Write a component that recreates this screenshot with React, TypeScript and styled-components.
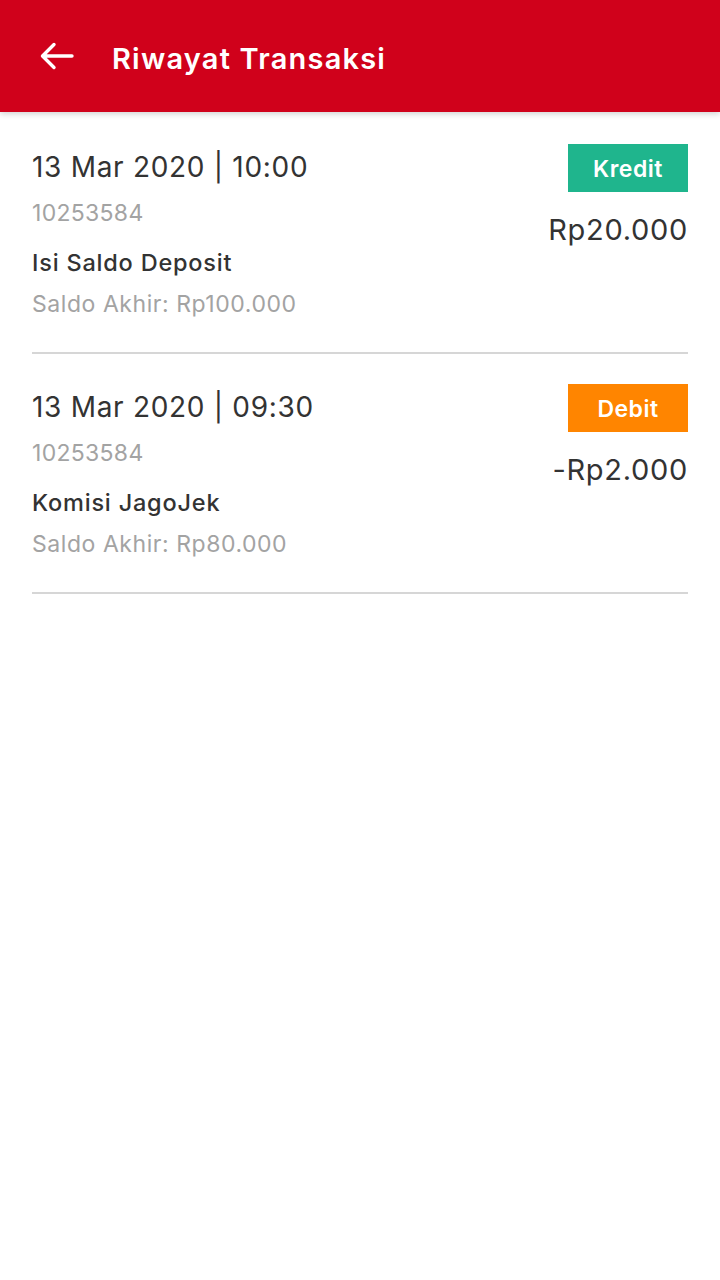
import React from "react";
import styled, { createGlobalStyle } from "styled-components";

const Global = createGlobalStyle`
  html, body { margin: 0; padding: 0; background: #ffffff; }
  body { font-family: "Inter", "Noto Sans", sans-serif; }
  * { box-sizing: border-box; }
`;

const Page = styled.div`
  width: 720px;
  min-height: 1280px;
  background: #ffffff;
`;

const Header = styled.header`
  height: 112px;
  background: #d0011b;
  display: flex;
  align-items: center;
  padding-left: 38px;
  gap: 36px;
  box-shadow: 0 2px 6px rgba(0, 0, 0, 0.18);
  position: relative;
  z-index: 1;
`;

const BackButton = styled.button`
  width: 38px;
  height: 38px;
  padding: 0;
  border: none;
  background: transparent;
  display: flex;
  align-items: center;
  justify-content: center;
`;

const Title = styled.h1`
  margin: 0;
  margin-top: 4px;
  color: #ffffff;
  font-size: 29px;
  font-weight: 600;
  letter-spacing: 1.2px;
`;

const List = styled.div`
  padding: 0 32px;
  margin-top: 2px;
`;

const Row = styled.div`
  display: flex;
  justify-content: space-between;
  padding: 30px 0 30px 0;
  border-bottom: 2px solid #d6d6d6;
  height: 240px;
`;

const Left = styled.div`
  display: flex;
  flex-direction: column;
`;

const DateText = styled.div`
  font-size: 28px;
  color: #333333;
  line-height: 36px;
  margin-top: 5px;
  letter-spacing: 0.7px;
`;

const IdText = styled.div`
  font-size: 23px;
  color: #a3a3a3;
  line-height: 30px;
  margin-top: 13px;
  letter-spacing: 0.3px;
`;

const Desc = styled.div`
  font-size: 23.5px;
  font-weight: 500;
  color: #333333;
  line-height: 30px;
  margin-top: 20px;
  letter-spacing: 0.8px;
`;

const Balance = styled.div`
  font-size: 23px;
  color: #a3a3a3;
  line-height: 30px;
  margin-top: 11px;
  letter-spacing: 0.55px;
`;

const Right = styled.div`
  display: flex;
  flex-direction: column;
  align-items: flex-end;
`;

const Badge = styled.div<{ $color: string }>`
  width: 120px;
  height: 48px;
  background: ${(p) => p.$color};
  color: #ffffff;
  font-size: 23px;
  font-weight: 600;
  letter-spacing: 0.5px;
  padding-top: 2px;
  display: flex;
  align-items: center;
  justify-content: center;
`;

const Amount = styled.div`
  font-size: 29px;
  color: #333333;
  line-height: 36px;
  margin-top: 20px;
  letter-spacing: 0.7px;
`;

type Tx = {
  date: string;
  id: string;
  desc: string;
  balance: string;
  type: "Kredit" | "Debit";
  amount: string;
};

const data: Tx[] = [
  {
    date: "13 Mar 2020 | 10:00",
    id: "10253584",
    desc: "Isi Saldo Deposit",
    balance: "Saldo Akhir: Rp100.000",
    type: "Kredit",
    amount: "Rp20.000",
  },
  {
    date: "13 Mar 2020 | 09:30",
    id: "10253584",
    desc: "Komisi JagoJek",
    balance: "Saldo Akhir: Rp80.000",
    type: "Debit",
    amount: "-Rp2.000",
  },
];

export default function App() {
  return (
    <Page>
      <Global />
      <Header>
        <BackButton aria-label="Kembali">
          <svg width="36" height="30" viewBox="0 0 36 30" fill="none">
            <path
              d="M33 15H4M15 3.5L3.5 15L15 26.5"
              stroke="#ffffff"
              strokeWidth="3.4"
              strokeLinecap="round"
              strokeLinejoin="round"
            />
          </svg>
        </BackButton>
        <Title>Riwayat Transaksi</Title>
      </Header>
      <List>
        {data.map((t, i) => (
          <Row key={i}>
            <Left>
              <DateText>{t.date}</DateText>
              <IdText>{t.id}</IdText>
              <Desc>{t.desc}</Desc>
              <Balance>{t.balance}</Balance>
            </Left>
            <Right>
              <Badge $color={t.type === "Kredit" ? "#1fb58d" : "#ff8500"}>
                {t.type}
              </Badge>
              <Amount>{t.amount}</Amount>
            </Right>
          </Row>
        ))}
      </List>
    </Page>
  );
}
